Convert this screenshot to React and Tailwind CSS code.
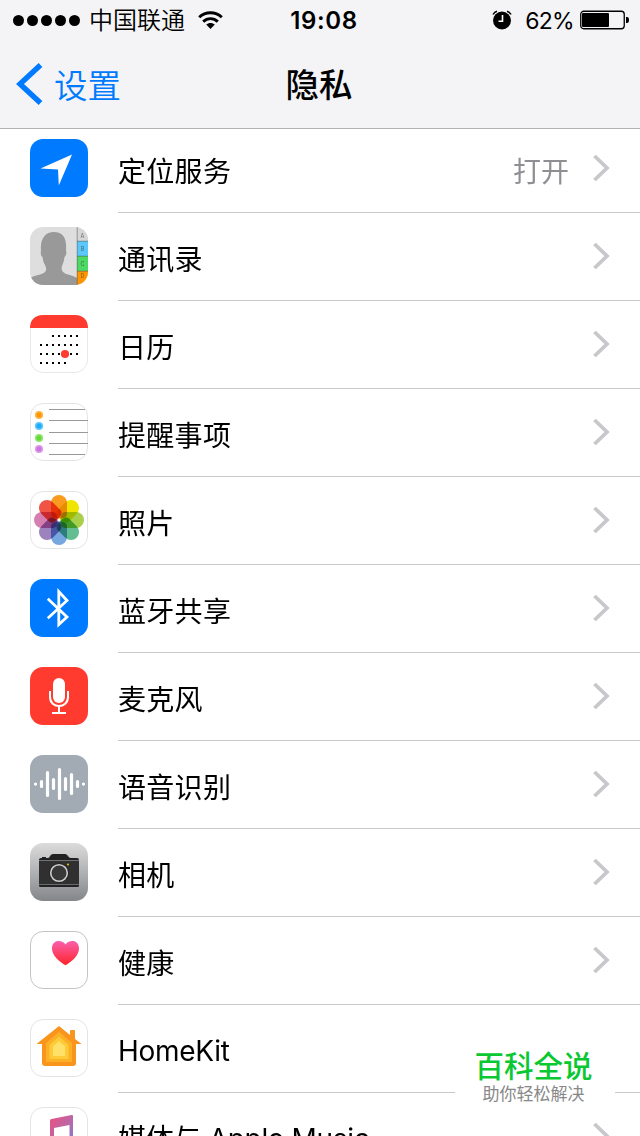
const LocationIcon = () => (
  <>
    <rect width="58" height="58" rx="13" fill="#007aff" />
    <path d="M42 15.5 10.5 29.5 28 30.5 28.8 46.5Z" fill="#fff" />
  </>
);

const ContactsIcon = () => (
  <>
    <defs>
      <clipPath id="contacts">
        <rect width="58" height="58" rx="13" />
      </clipPath>
    </defs>
    <g clipPath="url(#contacts)">
      <rect width="58" height="58" fill="#dedede" />
      <path
        d="M0 58V51C5 48 12 48 15 45 17 43 16 40 15 38 13.5 36 13 33 12.5 30 10.5 29 10.5 25 11 23.5 10 12 15 5 24 5S37 11 36 23.5C37 25 36 29 34.5 30 34 34 33 37 32 39 31 43 32 45 36 47 40 48 44 49 47 51V58Z"
        fill="#999"
      />
      <rect x="47" width="11" height="14" fill="#d6d6d6" />
      <rect x="47" y="14" width="11" height="15" fill="#5ac8fa" />
      <rect x="47" y="29" width="11" height="15" fill="#4cd964" />
      <rect x="47" y="44" width="11" height="14" fill="#ff9500" />
      <path d="M47.2 0V58M47 14.2H58M47 29.2H58M47 44.2H58" stroke="#555" strokeOpacity=".65" strokeWidth=".8" />
      <g fontSize="5.5" fill="#333" fillOpacity=".65" textAnchor="middle">
        <text x="52.5" y="11">A</text>
        <text x="52.5" y="24">B</text>
        <text x="52.5" y="39">C</text>
        <text x="52.5" y="51">D</text>
      </g>
    </g>
  </>
);

const calendarRows = [
  { y: 20, xs: [22, 28, 34, 40, 46] },
  { y: 29, xs: [10, 16, 22, 28, 34, 40, 46] },
  { y: 38, xs: [10, 16, 22, 28, 34, 40, 46] },
  { y: 47, xs: [10, 16, 22, 28, 34] },
];

const CalendarIcon = () => (
  <>
    <rect x=".5" y=".5" width="57" height="57" rx="12.5" fill="#fff" stroke="#e8e8e8" />
    <path d="M0 13C0 5 5 0 13 0H45C53 0 58 5 58 13Z" fill="#ff3b30" />
    {calendarRows.map((row) =>
      row.xs.map((x) => (
        <rect key={`${x}-${row.y}`} x={x} y={row.y} width="2" height="2" fill="#000" />
      ))
    )}
    <circle cx="35" cy="39" r="4.1" fill="#ff3b30" />
  </>
);

const RemindersIcon = () => (
  <>
    <rect x=".5" y=".5" width="57" height="57" rx="12.5" fill="#fff" stroke="#e4e4e4" />
    {[
      [12, "#ff9500"],
      [23, "#1badf8"],
      [35, "#63da38"],
      [46, "#cc73e1"],
    ].map(([y, color]) => (
      <g key={y} fill={color}>
        <circle cx="9" cy={y} r="4.1" fillOpacity=".7" />
        <circle cx="9" cy={y} r="2.5" />
      </g>
    ))}
    <path d="M19 6.5H55M19 17.5H58M19 29.5H58M19 40.5H58M19 51.5H55" stroke="#999" />
  </>
);

const petals = [
  "#f89b20",
  "#f0e500",
  "#a9d04a",
  "#62bd91",
  "#76a7df",
  "#9d82bd",
  "#d57fb1",
  "#f05445",
];

const PhotosIcon = () => (
  <>
    <rect x=".5" y=".5" width="57" height="57" rx="12.5" fill="#fff" stroke="#e4e4e4" />
    {petals.map((color, i) => (
      <path
        key={color}
        d="M21 12A8 8 0 0 1 37 12V23Q37 27.5 29 27.5Q21 27.5 21 23Z"
        fill={color}
        className="mix-blend-multiply"
        transform={`rotate(${i * 45} 29 29)`}
      />
    ))}
  </>
);

const BluetoothIcon = () => (
  <>
    <rect width="58" height="58" rx="13" fill="#007aff" />
    <path d="M17.8 19.8 37 38 28.8 45.5V12.5L37 21.5 17.8 39.2" fill="none" stroke="#fff" strokeWidth="2.8" />
  </>
);

const MicIcon = () => (
  <>
    <rect width="58" height="58" rx="13" fill="#ff3b30" />
    <rect x="23" y="11" width="12" height="25" rx="6" fill="#fff" />
    <path d="M20 24V30C20 42 38 42 38 30V24M29 39V46M22 46H36" fill="none" stroke="#fff" strokeWidth="2" />
  </>
);

const SpeechIcon = () => (
  <>
    <rect width="58" height="58" rx="13" fill="#a2aab4" />
    <path
      d="M5.5 29V29.1M11.5 26.5V31.5M17.5 17.5V40.5M23.5 24.5V33.5M29.5 14.5V43.5M35.5 23.5V34.5M41.5 19.5V38.5M47.5 26.5V31.5M53.5 29V29.1"
      stroke="#fff"
      strokeWidth="3.2"
      strokeLinecap="round"
    />
  </>
);

const CameraIcon = () => (
  <>
    <defs>
      <linearGradient id="camera" x2="0" y2="1">
        <stop stopColor="#dcdcdc" />
        <stop offset="1" stopColor="#85868a" />
      </linearGradient>
    </defs>
    <rect width="58" height="58" rx="13" fill="url(#camera)" />
    <path d="M9 17.5V16.5Q9 15 11 15H12V14H16V15H18C20 15 20 11 23 11H35C38 11 38 15 41 15H47Q49 15 49 17V17.5Z" fill="#222" />
    <path d="M9 18H49V41.2H9Z" fill="#303030" />
    <path d="M9 41.8H49V43Q49 44 47 44H11Q9 44 9 43Z" fill="#222" />
    <circle cx="29" cy="30" r="10" fill="#252525" />
    <circle cx="29" cy="30" r="8.3" fill="#383838" stroke="#ccc" strokeWidth="1.6" />
    <circle cx="38" cy="21.5" r="1" fill="#f5c518" />
  </>
);

const HealthIcon = () => (
  <>
    <defs>
      <linearGradient id="heart" x2="0" y2="1">
        <stop stopColor="#f95fae" />
        <stop offset="1" stopColor="#ff2428" />
      </linearGradient>
    </defs>
    <rect x=".5" y=".5" width="57" height="57" rx="12.5" fill="#fff" stroke="#c4c4c8" />
    <path
      d="M35.5 34.3C30 31 22 25 22 17.5 22 12.5 25 10 28.5 10 32 10 34 11.5 35.5 13.5 37 11.5 39 10 42.5 10 46 10 49 12.5 49 17.5 49 25 41 31 35.5 34.3Z"
      fill="url(#heart)"
    />
  </>
);

const HomeIcon = () => (
  <>
    <rect x=".5" y=".5" width="57" height="57" rx="12.5" fill="#fff" stroke="#e4e4e4" />
    <path
      d="M29 7 40 16V12Q40 11 41 11H44Q45 11 45 12V20L51.5 25H46V44Q46 47 43 47H15Q12 47 12 44V25H6.5Z"
      fill="#f9951c"
    />
    <path d="M29 13 42 24V43H16V24Z" fill="#fcb026" />
    <path d="M29 17.5 38.5 26V40H19.5V26Z" fill="#ffca38" />
    <path d="M29 22 35 27.5V37H23V27.5Z" fill="#ffe169" />
  </>
);

const MusicIcon = () => (
  <>
    <defs>
      <linearGradient id="music" x2="1" y2="1">
        <stop stopColor="#fb4a72" />
        <stop offset=".55" stopColor="#b968a8" />
        <stop offset="1" stopColor="#5b8bea" />
      </linearGradient>
    </defs>
    <rect x=".5" y=".5" width="57" height="57" rx="12.5" fill="#fff" stroke="#e4e4e4" />
    <path
      d="M20 13.5Q20 12.2 21.5 12L41.5 8Q43 7.8 43 9V38C43 44 33 45 33 39 33 35 38 35 39.5 34V18L24 21V43C24 49 13 50 13 44 13 40 18 40 20 39Z"
      fill="url(#music)"
    />
  </>
);

const rows = [
  { label: "定位服务", Icon: LocationIcon, value: "打开" },
  { label: "通讯录", Icon: ContactsIcon },
  { label: "日历", Icon: CalendarIcon },
  { label: "提醒事项", Icon: RemindersIcon },
  { label: "照片", Icon: PhotosIcon },
  { label: "蓝牙共享", Icon: BluetoothIcon },
  { label: "麦克风", Icon: MicIcon },
  { label: "语音识别", Icon: SpeechIcon },
  { label: "相机", Icon: CameraIcon },
  { label: "健康", Icon: HealthIcon },
  { label: "HomeKit", Icon: HomeIcon, latin: true },
  { label: "媒体与 Apple Music", Icon: MusicIcon, latin: true },
];

const StatusBar = () => (
  <div className="grid h-10 grid-cols-[1fr_auto_1fr] grid-rows-[40px] items-center pl-[13px] pr-[11px]">
    <div className="flex items-center">
      <div className="flex gap-[3px]">
        {[1, 2, 3, 4, 5].map((n) => (
          <span key={n} className="size-[11px] rounded-full bg-black" />
        ))}
      </div>
      <span className="ml-[9px] pt-[2px] text-[24px] leading-9 font-[350]">中国联通</span>
      <svg className="ml-[13px] h-[19px] w-[25px]" viewBox="0 0 25 19">
        <path d="M1.2 6.3C7.5.2 17.5.2 23.8 6.3M5.2 10.6C9.3 6.6 15.7 6.6 19.8 10.6" fill="none" stroke="#000" strokeWidth="2.9" />
        <path d="M8.2 13.6C10.6 11.3 14.4 11.3 16.8 13.6L12.5 18Z" />
      </svg>
    </div>
    <span className="ml-[6px] pt-[2px] text-[24px] leading-9 font-semibold tracking-[0.6px]">19:08</span>
    <div className="flex items-center justify-end">
      <svg className="h-[20px] w-[20px]" viewBox="0 0 20 20">
        <circle cx="10" cy="10.5" r="9" />
        <path d="M1 4.5Q2.5 1.8 5 1.2M19 4.5Q17.5 1.8 15 1.2" fill="none" stroke="#000" strokeWidth="1.5" />
        <path d="M10.5 5V11.3H6.5" fill="none" stroke="#fff" strokeWidth="1.6" />
      </svg>
      <span className="ml-[13px] pt-[2px] text-[23px] leading-9 tracking-[-0.7px]">62%</span>
      <svg className="ml-[6px] h-5 w-[49px]" viewBox="0 0 49 20">
        <rect x=".75" y="1.25" width="43.5" height="17.5" rx="3" fill="none" stroke="#000" strokeWidth="1.3" />
        <rect x="2" y="3" width="27" height="14" rx="1" />
        <path d="M46 7H47Q49 7 49 10T47 13H46Z" />
      </svg>
    </div>
  </div>
);

const Header = () => (
  <header className="relative z-10 h-[129px] border-b border-[#b2b2b2] bg-[#f4f4f6]">
    <StatusBar />
    <div className="grid h-[88px] grid-cols-[1fr_auto_1fr] items-center px-4">
      <button className="flex items-center text-[#007aff]">
        <svg className="h-[42px] w-[27px]" viewBox="0 0 27 42">
          <path d="M24.5 2 4 21 24.5 40" fill="none" stroke="currentColor" strokeWidth="5.4" />
        </svg>
        <span className="ml-[11px] pt-[3px] text-[33.5px] leading-[84px] font-[350]">设置</span>
      </button>
      <h1 className="pt-[2px] pr-[2px] text-[33.5px] leading-[84px] font-medium">隐私</h1>
    </div>
  </header>
);

const Row = ({ label, value, Icon, latin }) => (
  <li className="flex h-[88px]">
    <svg className="mt-[14px] ml-[30px] size-[58px] shrink-0" viewBox="0 0 58 58">
      <Icon />
    </svg>
    <div className="ml-[30px] flex h-[88px] flex-1 items-center border-b border-[#c8c7cc] pr-[30px]">
      <span
        className={`flex-1 text-[28px] whitespace-nowrap ${
          latin ? "pt-[4px] tracking-[-0.3px]" : "pt-[6px] tracking-[0.3px]"
        }`}
      >
        {label}
      </span>
      {value && <span className="pt-[6px] text-[28px] text-[#8e8e93]">{value}</span>}
      <svg className="mb-[2px] ml-6 h-[28px] w-[17px]" viewBox="0 0 17 28">
        <path d="M1.5 2 14 14 1.5 26" fill="none" stroke="#c7c7cc" strokeWidth="3.8" />
      </svg>
    </div>
  </li>
);

const App = () => {
  return (
    <div className="relative h-[1136px] w-[640px] overflow-hidden bg-white font-['Inter','Noto_Sans_CJK_SC',sans-serif] text-black">
      <Header />
      <ul className="-mt-1">
        {rows.map((row) => (
          <Row key={row.label} {...row} />
        ))}
      </ul>
      <div className="absolute right-[25px] bottom-[25px] flex h-[78px] w-[160px] flex-col items-center bg-white pt-[15px] pr-[3px]">
        <span className="text-[29.5px] leading-[36px] font-medium text-[#0ac832]">百科全说</span>
        <span className="text-[17px] leading-[20px] text-[#888]">助你轻松解决</span>
      </div>
    </div>
  );
};

export default App;
